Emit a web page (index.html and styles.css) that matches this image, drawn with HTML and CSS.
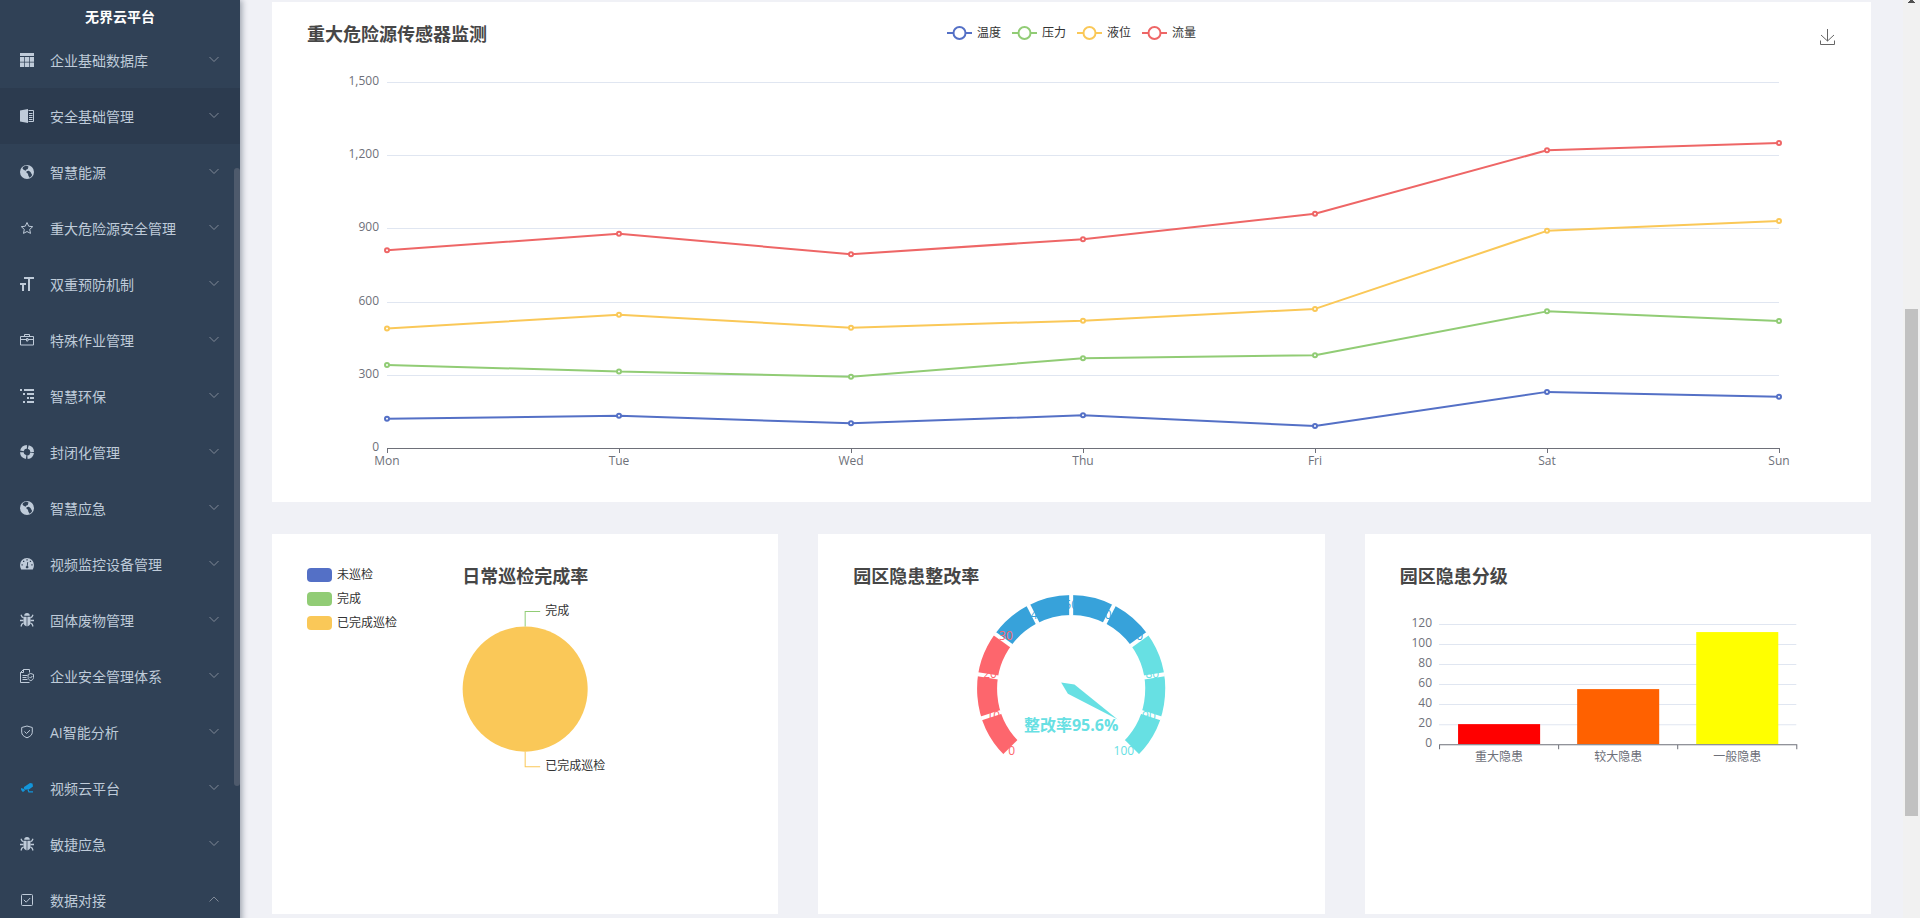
FILE: index.html
```html
<!DOCTYPE html>
<html lang="zh-CN">
<head>
<meta charset="utf-8">
<title>无界云平台</title>
<meta name="viewport" content="width=device-width, initial-scale=1">
<link rel="stylesheet" href="styles.css">
</head>
<body>
<svg class="sprite" aria-hidden="true">
  <symbol id="i-down" viewBox="0 0 12 12"><path d="M1.500 3l4.500 4.500L10.500 3" fill="none" stroke="currentColor"/></symbol>
  <symbol id="i-up" viewBox="0 0 12 12"><path d="M1.500 7.500L6 3l4.500 4.500" fill="none" stroke="currentColor"/></symbol>
  <symbol id="i-table" viewBox="0 0 14 14"><path d="M0 0h14v3H0z"/><path d="M0 4h4.300v4.700H0zM5 4h4v4.700H5zM9.700 4H14v4.700H9.700zM0 9.400h4.300V14H0zM5 9.400h4V14H5zM9.700 9.400H14V14H9.700z"/></symbol>
  <symbol id="i-book" viewBox="0 0 14 14"><path d="M0 1.500L8 0v14l-8-1.500z"/><path d="M8.500 1.500h5v11h-5M9 4.500h3.500M9 6.500h3.500M9 8.500h3.500M9 10.500h3.500" fill="none" stroke="currentColor"/></symbol>
  <symbol id="i-globe" viewBox="0 0 14 14"><path fill-rule="evenodd" d="M7 0a7 7 0 1 0 0 14A7 7 0 0 0 7 0zM3 2l2.500-1.300 1.700.1L8.800 2l-1 .8.200 1.200-1.600.4-.7 1.300L3.600 4.800 2.500 3.500zM6.500 6.300l2.300-.5 1.700 1.200.8 1.500.9 1.500-1 1.500-1.700 1.200-1.300-2.400-.2-1.500-1.500-1z"/></symbol>
  <symbol id="i-star" viewBox="0 0 14 14"><path d="M7 1.500l1.700 3.700 4 .5-3 2.700.8 4L7 10.500l-3.500 1.900.8-4-3-2.700 4-.5z" fill="none" stroke="currentColor"/></symbol>
  <symbol id="i-size" viewBox="0 0 14 14"><path d="M4 0h10v2h-4v12H8V2H4zM0 6h6v2H4v6H2V8H0z"/></symbol>
  <symbol id="i-case" viewBox="0 0 14 14"><path d="M.5 3.500h13v8.500H.5zM4.500 3.500v-2h5v2M.5 6.500H6M8 6.500h5.500M6.500 5.500h1.500v2.500H6.500z" fill="none" stroke="currentColor"/></symbol>
  <symbol id="i-tree" viewBox="0 0 14 14"><path d="M0 0h2v2H0zM4 0h10v2H4zM3 4h2v2H3zM7 4h7v2H7zM7 8h2v2H7zM10 8h4v2h-4zM3 12h2v2H3zM7 12h7v2H7z"/></symbol>
  <symbol id="i-buoy" viewBox="0 0 14 14"><circle cx="7" cy="7" r="5.200" fill="none" stroke="currentColor" stroke-width="3.600" stroke-dasharray="6.768 1.400" stroke-dashoffset="-.7"/></symbol>
  <symbol id="i-dash" viewBox="0 0 14 14"><path fill-rule="evenodd" d="M7 1a7 7 0 0 0-7 7c0 1.600.4 3 1.200 4.500h11.600C13.600 11 14 9.600 14 8a7 7 0 0 0-7-7zM6.400 2.300h1.300v1.300H6.400zM3 3.800h1.300v1.300H3zM9.800 3.800h1.300v1.300H9.800zM1.500 7.300h1.300v1.300H1.500zM11.300 7.300h1.300v1.300h-1.300zM7.300 5l.9.200-.5 3.500.9 1.200-.6 1.300H6.200l-.6-1.300 1.200-1.200z"/></symbol>
  <symbol id="i-bug" viewBox="0 0 14 14"><path d="M4.200 2.700a2.800 2.700 0 0 1 5.600 0zM3.500 3.700h3v9.800a4 4 0 0 1-3-3.500zM7.500 3.700h3V10a4 4 0 0 1-3 3.500z"/><path d="M6.500 4h1v9h-1z" opacity=".5"/><path d="M1 1.700l1 2 1.500 1M13 1.700l-1 2-1.500 1M0 7.500h3.500M14 7.500h-3.500M3.500 10l-1.700 1.200L1 13.500M10.500 10l1.700 1.200.8 2.300" fill="none" stroke="currentColor" stroke-width="1.300"/></symbol>
  <symbol id="i-doc" viewBox="0 0 14 14"><path d="M9.500 3.500v-3h-6l-3 3v10h9M.5 3.500h3v-3M2.500 6.500h5M2.500 8.500h4M2.500 10.500h5M10.800 4.500l2.700 1v3c0 1.500-1 2.500-2.700 3.200-1.700-.7-2.700-1.700-2.700-3.200v-3zM9.500 8l1.100 1.100L12.300 7" fill="none" stroke="currentColor"/></symbol>
  <symbol id="i-shield" viewBox="0 0 14 14"><path d="M7 1l5.300 1.500v4.700c0 2.600-2 4.300-5.300 5.600-3.300-1.300-5.300-3-5.300-5.600V2.500zM4.500 6.500l2 2 3.500-3.300" fill="none" stroke="currentColor"/></symbol>
  <symbol id="i-camera" viewBox="0 0 14 14"><path d="M4 6l6-4 2.500.6L13 5.500 9.300 8.200 5 8.800 3.800 7.500zM1 7l3 1 1 1.500L3 11l-1-.8L1 8.500zM9 8.500v1.800h4v1.200H8.500L7.500 9z"/></symbol>
  <symbol id="i-check" viewBox="0 0 14 14"><rect x="1.500" y="1.500" width="11" height="11" rx="1" fill="none" stroke="currentColor"/><path d="M3.800 6.800l2.400 2.400 4-4.200" fill="none" stroke="currentColor"/></symbol>
</svg>

<div class="app">
  <aside class="sidebar">
    <h1 class="brand">无界云平台</h1>
    <nav class="menu">
      <button class="item"><svg class="icon"><use href="#i-table"/></svg><span class="label">企业基础数据库</span><svg class="arrow"><use href="#i-down"/></svg></button>
      <button class="item item-active"><svg class="icon"><use href="#i-book"/></svg><span class="label">安全基础管理</span><svg class="arrow"><use href="#i-down"/></svg></button>
      <button class="item"><svg class="icon"><use href="#i-globe"/></svg><span class="label">智慧能源</span><svg class="arrow"><use href="#i-down"/></svg></button>
      <button class="item"><svg class="icon"><use href="#i-star"/></svg><span class="label">重大危险源安全管理</span><svg class="arrow"><use href="#i-down"/></svg></button>
      <button class="item"><svg class="icon"><use href="#i-size"/></svg><span class="label">双重预防机制</span><svg class="arrow"><use href="#i-down"/></svg></button>
      <button class="item"><svg class="icon"><use href="#i-case"/></svg><span class="label">特殊作业管理</span><svg class="arrow"><use href="#i-down"/></svg></button>
      <button class="item"><svg class="icon"><use href="#i-tree"/></svg><span class="label">智慧环保</span><svg class="arrow"><use href="#i-down"/></svg></button>
      <button class="item"><svg class="icon"><use href="#i-buoy"/></svg><span class="label">封闭化管理</span><svg class="arrow"><use href="#i-down"/></svg></button>
      <button class="item"><svg class="icon"><use href="#i-globe"/></svg><span class="label">智慧应急</span><svg class="arrow"><use href="#i-down"/></svg></button>
      <button class="item"><svg class="icon"><use href="#i-dash"/></svg><span class="label">视频监控设备管理</span><svg class="arrow"><use href="#i-down"/></svg></button>
      <button class="item"><svg class="icon"><use href="#i-bug"/></svg><span class="label">固体废物管理</span><svg class="arrow"><use href="#i-down"/></svg></button>
      <button class="item"><svg class="icon"><use href="#i-doc"/></svg><span class="label">企业安全管理体系</span><svg class="arrow"><use href="#i-down"/></svg></button>
      <button class="item"><svg class="icon"><use href="#i-shield"/></svg><span class="label">AI智能分析</span><svg class="arrow"><use href="#i-down"/></svg></button>
      <button class="item"><svg class="icon icon-blue"><use href="#i-camera"/></svg><span class="label">视频云平台</span><svg class="arrow"><use href="#i-down"/></svg></button>
      <button class="item"><svg class="icon"><use href="#i-bug"/></svg><span class="label">敏捷应急</span><svg class="arrow"><use href="#i-down"/></svg></button>
      <button class="item"><svg class="icon"><use href="#i-check"/></svg><span class="label">数据对接</span><svg class="arrow"><use href="#i-up"/></svg></button>
    </nav>
    <div class="side-thumb"></div>
  </aside>

  <main class="content">
    <section class="card">
      <header class="head">
        <h2 class="title">重大危险源传感器监测</h2>
        <ul class="legend">
          <li class="blue"><svg class="mark" viewBox="0 0 25 14"><path d="M0 7h25"/><circle cx="12.500" cy="7" r="6"/></svg>温度</li>
          <li class="green"><svg class="mark" viewBox="0 0 25 14"><path d="M0 7h25"/><circle cx="12.500" cy="7" r="6"/></svg>压力</li>
          <li class="yellow"><svg class="mark" viewBox="0 0 25 14"><path d="M0 7h25"/><circle cx="12.500" cy="7" r="6"/></svg>液位</li>
          <li class="red"><svg class="mark" viewBox="0 0 25 14"><path d="M0 7h25"/><circle cx="12.500" cy="7" r="6"/></svg>流量</li>
        </ul>
        <button class="save" aria-label="保存为图片"><svg class="save-icon" viewBox="0 0 16 18"><path d="M7.500 1v12M1 7l6.500 6L14 7M.5 12.500v4h14v-4"/></svg></button>
      </header>
      <svg class="chart" id="line-chart" viewBox="0 0 1599 500"></svg>
    </section>

    <div class="row">
      <section class="card">
        <header class="head head-low">
          <ul class="legend legend-column">
            <li><i class="swatch blue"></i>未巡检</li>
            <li><i class="swatch green"></i>完成</li>
            <li><i class="swatch yellow"></i>已完成巡检</li>
          </ul>
          <h2 class="title">日常巡检完成率</h2>
        </header>
        <svg class="chart" viewBox="0 0 506 380">
          <circle class="pie" cx="253" cy="155" r="62.500"/>
          <path class="lead green" d="M253 92.500v-15h15"/>
          <path class="lead yellow" d="M253 217.500v15h15"/>
          <text class="note" x="273" y="81">完成</text>
          <text class="note" x="273" y="236">已完成巡检</text>
        </svg>
      </section>

      <section class="card">
        <header class="head head-low"><h2 class="title">园区隐患整改率</h2></header>
        <svg class="chart" id="gauge-chart" viewBox="0 0 506 380"></svg>
      </section>

      <section class="card">
        <header class="head head-low"><h2 class="title">园区隐患分级</h2></header>
        <svg class="chart" id="bar-chart" viewBox="0 0 506 380"></svg>
      </section>
    </div>
  </main>

  <div class="scrollbar">
    <svg class="scroll-arrow" viewBox="0 0 7 3"><path d="M2 0h3v1h1v1h1v1H0V2h1V1h1z"/></svg>
    <div class="thumb"></div>
    <svg class="scroll-arrow scroll-arrow-end" viewBox="0 0 7 3"><path d="M0 2h7v1H0z"/></svg>
  </div>
</div>
<script src="charts.js"></script>
</body>
</html>
```
FILE: styles.css
```css
* { box-sizing: border-box; }

body {
  margin: 0;
  background: #f0f2f5;
  font-family: "Open Sans", "Noto Sans CJK SC", sans-serif;
  font-size: 12px;
  color: #333;
}

h1, h2, ul { margin: 0; padding: 0; }
button { border: 0; padding: 0; background: none; font: inherit; cursor: pointer; }

.sprite { display: none; }

.app {
  display: grid;
  grid-template-columns: 240px minmax(0, 1fr) 17px;
  height: 100vh;
  overflow: hidden;
  background: #f0f1f6;
}

.sidebar {
  position: relative;
  z-index: 1;
  background: #304156;
  box-shadow: 2px 0 6px rgba(0, 21, 41, 0.35);
}

.brand {
  height: 32px;
  padding-top: 2px;
  font-size: 14px;
  line-height: 30px;
  text-align: center;
  color: #fff;
}

.menu { display: flex; flex-direction: column; }

.item {
  display: flex;
  align-items: center;
  height: 56px;
  padding: 0 20px;
  font-size: 14px;
  text-align: left;
  color: #bfcbd9;
}
.item-active { background: #2c3b4f; }

.icon { width: 14px; height: 14px; margin-right: 16px; fill: currentColor; }
.icon-blue { color: #1296db; }
.label { flex: 1; padding-top: 2px; line-height: 24px; }
.arrow { width: 12px; height: 12px; color: #808997; }

.side-thumb {
  position: absolute;
  top: 168px;
  right: 0;
  width: 6px;
  height: 618px;
  border-radius: 3px;
  background: #4e5a6c;
}

.content {
  display: flex;
  flex-direction: column;
  gap: 32px;
  padding: 2px 32px 4px;
}

.row {
  display: grid;
  grid-template-columns: repeat(3, minmax(0, 1fr));
  gap: 40px;
}

/* The heading row and the drawing share one grid cell. */
.card { display: grid; background: #fff; }
.head, .chart { grid-area: 1 / 1; }

.head {
  z-index: 1;
  display: grid;
  grid-template-columns: 1fr auto 1fr;
  align-self: start;
  padding: 19px 35px 0;
}
.head-low { padding-top: 29px; }

.title {
  font-size: 18px;
  line-height: 26px;
  color: #464646;
  white-space: nowrap;
}

.legend { display: flex; gap: 11px; list-style: none; }
.legend li {
  display: flex;
  align-items: center;
  gap: 5px;
  height: 24px;
  line-height: 24px;
}
.legend-column { flex-direction: column; gap: 0; }
.mark { width: 25px; height: 14px; fill: #fff; stroke-width: 2; }
.swatch { width: 25px; height: 14px; border-radius: 4px; }

.blue .mark { stroke: #5470c6; }
.green .mark { stroke: #91cc75; }
.yellow .mark { stroke: #fac858; }
.red .mark { stroke: #ee6666; }
.swatch.blue { background: #5470c6; }
.swatch.green { background: #91cc75; }
.swatch.yellow { background: #fac858; }

.save { justify-self: end; height: 32px; }
.save-icon { display: block; width: 16px; height: 18px; fill: none; stroke: #666; }

.chart { display: block; width: 100%; height: auto; }
.chart text { font-size: 12px; }
.chart .axis-text { fill: #6e7079; }
.chart .note { fill: #333; }
.chart .value { font-size: 16px; font-weight: 700; fill: #67e0e3; }
.end { text-anchor: end; }
.middle { text-anchor: middle; }
.grid { stroke: #e0e6f1; }
.axis { fill: none; stroke: #6e7079; }
.series { fill: none; stroke-width: 2; stroke-linejoin: bevel; }
.dot { fill: #fff; stroke-width: 2; }
.pie { fill: #fac858; }
.lead { fill: none; }
.lead.green { stroke: #91cc75; }
.lead.yellow { stroke: #fac858; }
.arc { fill: none; stroke-width: 20; }
.split { stroke: #fff; stroke-width: 4; }
.needle { fill: #67e0e3; }

.scrollbar {
  display: flex;
  flex-direction: column;
  align-items: center;
  background: #f1f1f1;
}
.scroll-arrow { width: 7px; height: 3px; fill: #505050; }
.scroll-arrow-end { margin-top: auto; }
.thumb { width: 13px; height: 507px; margin-top: 306px; background: #c1c1c1; }
```
FILE: charts.js
```javascript
const el = (parent, tag, attrs, text) => {
  const node = document.createElementNS('http://www.w3.org/2000/svg', tag);
  for (const key in attrs) node.setAttribute(key, attrs[key]);
  if (text !== undefined) node.textContent = text;
  parent.appendChild(node);
};

// Sensor line chart
const line = document.getElementById('line-chart');
const days = ['Mon', 'Tue', 'Wed', 'Thu', 'Fri', 'Sat', 'Sun'];
const px = i => 115 + i * 232;
const py = v => 446 - v * 366 / 1500;
for (let v = 0; v <= 1500; v += 300) {
  const y = Math.round(py(v)) + 0.5;
  if (v) el(line, 'path', { class: 'grid', d: `M115 ${y}H1507` });
  el(line, 'text', { class: 'axis-text end', x: 107, y: Math.round(py(v)) + 3 }, v.toLocaleString('en-US'));
}
el(line, 'path', { class: 'axis', d: 'M115 446.5H1507' });
days.forEach((day, i) => {
  el(line, 'path', { class: 'axis', d: `M${px(i) + 0.5} 446v5` });
  el(line, 'text', { class: 'axis-text middle', x: px(i), y: 463 }, day);
});
[
  ['#5470c6', [120, 132, 101, 134, 90, 230, 210]],
  ['#91cc75', [340, 314, 292, 368, 380, 560, 520]],
  ['#fac858', [490, 546, 493, 522, 570, 890, 930]],
  ['#ee6666', [810, 878, 794, 856, 960, 1220, 1250]]
].forEach(([stroke, values]) => {
  el(line, 'polyline', { class: 'series', stroke, points: values.map((v, i) => `${px(i)},${py(v)}`).join(' ') });
  values.forEach((v, i) => el(line, 'circle', { class: 'dot', stroke, cx: px(i), cy: py(v), r: 2 }));
});

// Rectification gauge
const gauge = document.getElementById('gauge-chart');
const cx = 253, cy = 155;
const at = (value, r) => {
  const a = (225 - value * 2.7) * Math.PI / 180;
  return [cx + r * Math.cos(a), cy - r * Math.sin(a)];
};
[[0, 30, '#fd666d'], [30, 70, '#37a2da'], [70, 100, '#67e0e3']].forEach(([from, to, stroke]) => {
  el(gauge, 'path', { class: 'arc', stroke, d: `M${at(from, 84)}A84 84 0 0 1 ${at(to, 84)}` });
});
for (let v = 0; v <= 100; v += 10) {
  el(gauge, 'path', { class: 'split', d: `M${at(v, 94.5)}L${at(v, 73.5)}` });
}
for (let v = 0; v <= 100; v += 10) {
  const [x, y] = at(v, 89);
  const side = v < 50 ? '' : v > 50 ? 'end' : 'middle';
  const drop = v >= 40 && v <= 60 ? 9 : 3;
  const fill = v <= 30 ? '#fd666d' : v <= 70 ? '#37a2da' : '#67e0e3';
  el(gauge, 'text', { class: side, fill, x, y: y + drop }, v);
}
el(gauge, 'path', { class: 'needle', d: `M${at(95.6, 55.6)}L256.3 150.300L243 148.300L249.700 159.700Z` });
el(gauge, 'text', { class: 'value middle', x: cx, y: 197 }, '整改率95.6%');

// Hazard level bar chart
const bar = document.getElementById('bar-chart');
for (let v = 0; v <= 120; v += 20) {
  if (v) el(bar, 'path', { class: 'grid', d: `M74 ${210.5 - v}H431` });
  el(bar, 'text', { class: 'axis-text end', x: 67, y: 213 - v }, v);
}
[['重大隐患', 20, '#ff0000'], ['较大隐患', 55, '#ff6100'], ['一般隐患', 112, '#ffff00']].forEach(([name, v, fill], i) => {
  el(bar, 'rect', { x: 93 + i * 119, y: 210 - v, width: 82, height: v, fill });
  el(bar, 'text', { class: 'axis-text middle', x: 134 + i * 119, y: 227 }, name);
});
el(bar, 'path', { class: 'axis', d: 'M74 210.500H431M74.500 210v5M193.500 210v5M312.500 210v5M431.500 210v5' });
```
